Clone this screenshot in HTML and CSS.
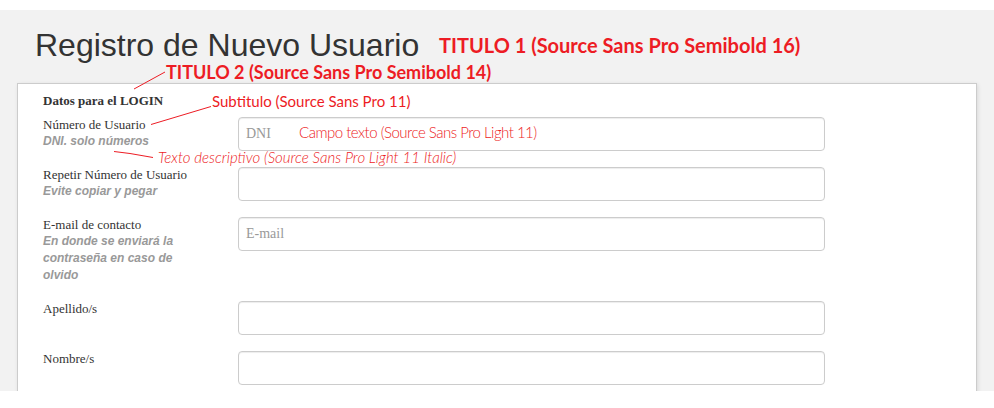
FILE: index.html
```
<!DOCTYPE html>
<html lang="es">
<head>
<meta charset="utf-8">
<title>Registro de Nuevo Usuario</title>
<link rel="stylesheet" href="styles.css">
</head>
<body>
<div class="page">
  <h1 class="title">Registro de Nuevo Usuario</h1>
  <div class="card">
    <h2 class="section">Datos para el LOGIN</h2>
    <div class="rows">
      <div class="row">
        <div class="label">
          <div class="name">Número de Usuario</div>
          <div class="desc">DNI. solo números</div>
        </div>
        <input class="field" type="text" placeholder="DNI">
      </div>
      <div class="row">
        <div class="label">
          <div class="name">Repetir Número de Usuario</div>
          <div class="desc">Evite copiar y pegar</div>
        </div>
        <input class="field" type="text">
      </div>
      <div class="row">
        <div class="label">
          <div class="name">E-mail de contacto</div>
          <div class="desc narrow">En donde se enviará la contraseña en caso de olvido</div>
        </div>
        <input class="field" type="text" placeholder="E-mail">
      </div>
      <div class="row">
        <div class="label">
          <div class="name">Apellido/s</div>
        </div>
        <input class="field" type="text">
      </div>
      <div class="row">
        <div class="label">
          <div class="name">Nombre/s</div>
        </div>
        <input class="field" type="text">
      </div>
    </div>
  </div>
</div>

<div class="notes" aria-hidden="true">
  <svg class="leaders" width="994" height="408" viewBox="0 0 994 408">
    <line x1="134" y1="89" x2="165" y2="72"/>
    <line x1="151" y1="124.5" x2="211" y2="106.5"/>
    <polyline points="114,151.5 130,153.5 153,157.5"/>
  </svg>
  <span class="note note-t1">TITULO 1 (Source Sans Pro Semibold 16)</span>
  <span class="note note-t2">TITULO 2 (Source Sans Pro Semibold 14)</span>
  <span class="note note-sub">Subtitulo (Source Sans Pro 11)</span>
  <span class="note note-field">Campo texto (Source Sans Pro Light 11)</span>
  <span class="note note-desc">Texto descriptivo (Source Sans Pro Light 11 Italic)</span>
</div>
</body>
</html>
```
FILE: styles.css
```
* { box-sizing: border-box; }

html, body {
  margin: 0;
  padding: 0;
  background: #ffffff;
}

body {
  position: relative;
  width: 994px;
  height: 408px;
  overflow: hidden;
  font-family: "Liberation Serif", "Times New Roman", serif;
  color: #333333;
}

.page {
  margin-top: 10px;
  height: 381px;
  background: #f2f2f2;
  overflow: hidden;
  padding-top: 17px;
}

.title {
  margin: 0 0 20px 35px;
  font-family: "Liberation Sans", Arial, sans-serif;
  font-weight: 400;
  font-size: 32px;
  line-height: 36px;
  color: #333333;
}

.card {
  margin-left: 17px;
  width: 960px;
  min-height: 420px;
  background: #ffffff;
  border: 1px solid #cccccc;
  box-shadow: 1px 1px 4px rgba(0, 0, 0, 0.10);
  padding: 9px 25px 0 25px;
}

.section {
  margin: 0 0 8px 0;
  font-family: "Liberation Serif", "Times New Roman", serif;
  font-weight: 700;
  font-size: 13px;
  line-height: 16px;
  color: #333333;
}

.rows {
  display: flex;
  flex-direction: column;
  gap: 16px;
}

.row {
  display: grid;
  grid-template-columns: 195px 587px;
  align-items: start;
}

.label {
  padding-right: 10px;
}

.name {
  font-family: "Liberation Serif", "Times New Roman", serif;
  font-size: 13px;
  line-height: 16px;
  color: #333333;
}

.desc {
  font-family: "Liberation Sans", Arial, sans-serif;
  font-style: italic;
  font-weight: 700;
  font-size: 12px;
  line-height: 17px;
  color: #999999;
  padding-bottom: 1px;
}

.desc.narrow {
  width: 150px;
}

.field {
  display: block;
  width: 587px;
  height: 34px;
  margin: 0;
  padding: 0 7px;
  border: 1px solid #cccccc;
  border-radius: 4px;
  background: #ffffff;
  box-shadow: inset 0 1px 1px rgba(0, 0, 0, 0.075);
  font-family: "Liberation Serif", "Times New Roman", serif;
  font-size: 14px;
  color: #555555;
  outline: none;
}

.field::placeholder {
  color: #999999;
  opacity: 1;
}

/* annotation overlay */
.notes {
  position: absolute;
  top: 0;
  left: 0;
  width: 994px;
  height: 408px;
  pointer-events: none;
}

.leaders {
  position: absolute;
  top: 0;
  left: 0;
}

.leaders line,
.leaders polyline {
  stroke: #ed1c24;
  stroke-width: 1;
  fill: none;
}

.note {
  position: absolute;
  white-space: nowrap;
  font-family: Lato, "Open Sans", sans-serif;
  line-height: 1;
  color: #ed1c24;
}

.note-t1 {
  left: 439px;
  top: 35px;
  font-size: 20px;
  font-weight: 700;
}

.note-t2 {
  left: 166px;
  top: 63px;
  font-size: 18px;
  font-weight: 700;
}

.note-sub {
  left: 212px;
  top: 94px;
  font-size: 15px;
  font-weight: 400;
}

.note-field {
  left: 299px;
  top: 125px;
  font-size: 15px;
  font-weight: 300;
  letter-spacing: -0.5px;
}

.note-desc {
  left: 158px;
  top: 150px;
  font-size: 15px;
  font-weight: 300;
  font-style: italic;
}
```
